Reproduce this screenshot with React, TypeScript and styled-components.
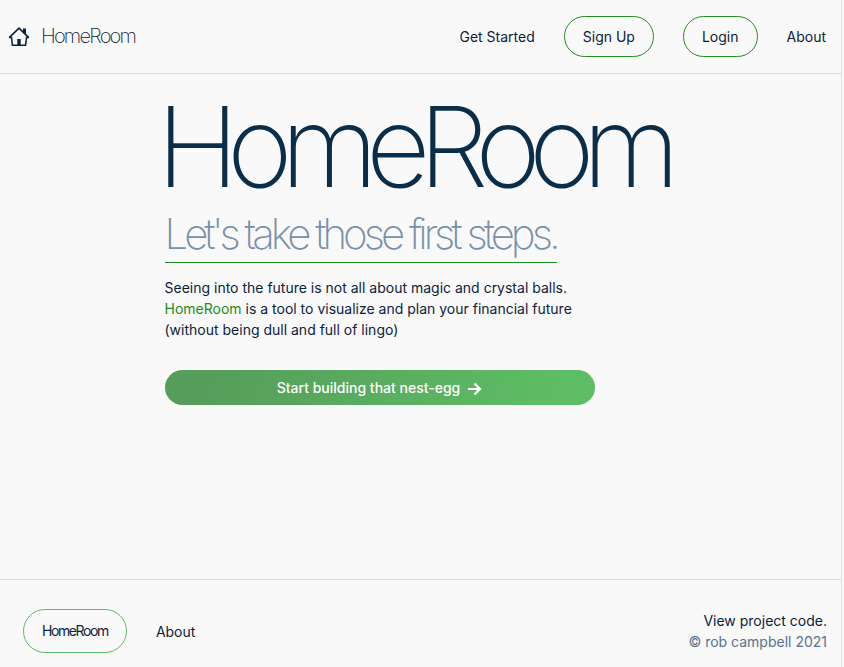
import React from "react";
import styled, { createGlobalStyle } from "styled-components";

const GlobalStyle = createGlobalStyle`
  *, *::before, *::after { box-sizing: border-box; }
  body {
    margin: 0;
    background: #f9f9f9;
    color: #0c2239;
    font-family: Inter, "Liberation Sans", sans-serif;
    font-size: 14px;
    line-height: 21px;
  }
  a { color: inherit; text-decoration: none; }
`;

const Page = styled.div`
  display: flex;
  flex-direction: column;
  min-height: 100vh;
  margin-right: 2px;
  border-right: 1px solid #dde2e8;
`;

const Header = styled.header`
  display: flex;
  align-items: center;
  justify-content: space-between;
  padding: 16px 15px 16px 8px;
  border-bottom: 1px solid #d3dde6;
`;

const Brand = styled.a`
  display: flex;
  align-items: center;
  gap: 11px;
  font-size: 20px;
  font-weight: 200;
  letter-spacing: -0.09em;
`;

const Nav = styled.nav`
  display: flex;
  align-items: center;
  gap: 29px;
`;

const PillLink = styled.a<{ $tone: string; $tall?: boolean }>`
  padding: ${(p) => (p.$tall ? "10px 18px" : "9px 18px")};
  border: 1px solid ${(p) => p.$tone};
  border-radius: 24px;
  line-height: ${(p) => (p.$tall ? "22px" : "21px")};
`;

const Main = styled.main`
  flex: 1;
  display: flex;
  flex-direction: column;
  align-items: flex-start;
  width: 100%;
  max-width: 512px;
  margin: 0 auto;
  padding-top: 16px;
`;

/* The negative margin hangs the side bearing of the large H, so its stem lines up with the copy below. */
const Title = styled.h1`
  margin: 0 0 0 -8px;
  color: #0a2d49;
  font-size: 112px;
  font-weight: 200;
  line-height: 112px;
  letter-spacing: -12px;
`;

const Subtitle = styled.h2`
  margin: 0;
  padding: 8px 0 4px;
  border-bottom: 1px solid #228b22;
  color: #7890aa;
  font-size: 42px;
  font-weight: 200;
  line-height: 48px;
  letter-spacing: -4px;
`;

const Intro = styled.p`
  margin: 14px 0 30px;
  max-width: 430px;
`;

const Accent = styled.span`
  color: #228b22;
`;

const StartButton = styled.button`
  display: flex;
  align-items: center;
  justify-content: center;
  gap: 6px;
  width: 100%;
  max-width: 430px;
  padding: 7px 16px;
  border: 0;
  border-radius: 18px;
  background: linear-gradient(110deg, #569d5b 10%, #5dbd64 90%);
  color: #fff;
  font: inherit;
  font-weight: 500;
  cursor: pointer;
`;

const Footer = styled.footer`
  display: flex;
  align-items: center;
  justify-content: space-between;
  padding: 29px 14px 14px 23px;
  border-top: 1px solid #d3dde6;
`;

const FooterBrand = styled.span`
  letter-spacing: -0.1em;
`;

const Credits = styled.div`
  display: flex;
  flex-direction: column;
  align-items: flex-end;
`;

const Copyright = styled.span`
  color: #58718d;
`;

const HomeIcon = () => (
  <svg width="22" height="22" viewBox="0 0 22 22" fill="none" stroke="currentColor" aria-hidden="true">
    <path d="M1.2 11.6 11 2.2l9.8 9.4" strokeWidth="1.6" />
    <path d="M1.2 11.6h2.3l.9 7.6h13.2l.9-7.6h2.3" strokeWidth="1.5" />
    <path d="M15 2.6h3v6.6l-3-2.8z" fill="currentColor" stroke="none" />
    <path d="M9.3 13h3.4v6.2H9.3z" fill="currentColor" stroke="none" />
  </svg>
);

const ArrowIcon = () => (
  <svg width="16" height="16" viewBox="0 0 16 16" fill="none" stroke="currentColor" strokeWidth="2.2" aria-hidden="true">
    <path d="M2 9h11.6M8.5 3.6 14 9l-5.5 5.4" />
  </svg>
);

export default function App() {
  return (
    <>
      <GlobalStyle />
      <Page>
        <Header>
          <Brand href="#home">
            <HomeIcon />
            HomeRoom
          </Brand>
          <Nav aria-label="Main">
            <a href="#start">Get Started</a>
            <PillLink href="#signup" $tone="#228b22">Sign Up</PillLink>
            <PillLink href="#login" $tone="#228b22">Login</PillLink>
            <a href="#about">About</a>
          </Nav>
        </Header>
        <Main>
          <Title>HomeRoom</Title>
          <Subtitle>Let's take those first steps.</Subtitle>
          <Intro>
            Seeing into the future is not all about magic and crystal balls.{" "}
            <Accent>HomeRoom</Accent> is a tool to visualize and plan your financial future
            (without being dull and full of lingo)
          </Intro>
          <StartButton type="button">
            Start building that nest-egg
            <ArrowIcon />
          </StartButton>
        </Main>
        <Footer>
          <Nav aria-label="Footer">
            <PillLink href="#home" $tone="#5dbd64" $tall>
              <FooterBrand>HomeRoom</FooterBrand>
            </PillLink>
            <a href="#about">About</a>
          </Nav>
          <Credits>
            <a href="#code">View project code.</a>
            <Copyright>© rob campbell 2021</Copyright>
          </Credits>
        </Footer>
      </Page>
    </>
  );
}
